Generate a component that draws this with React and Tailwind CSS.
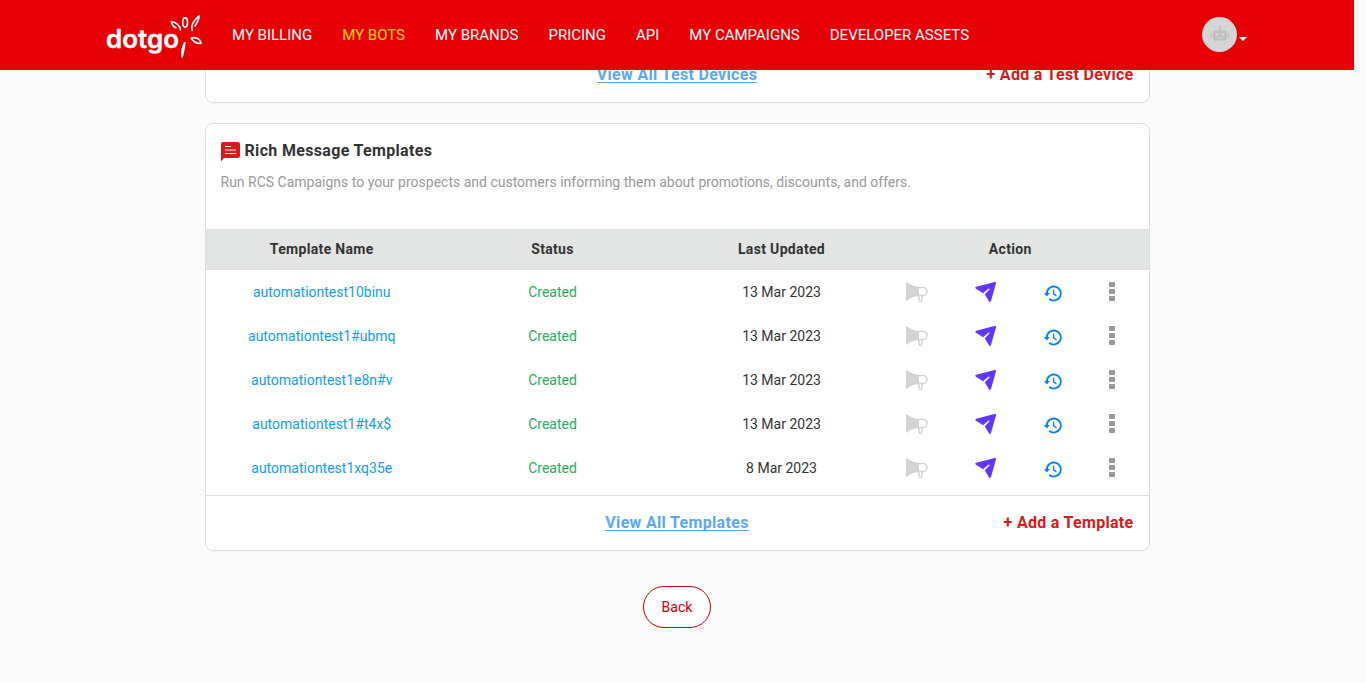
import React from "react";

const navItems = ["MY BILLING", "MY BOTS", "MY BRANDS", "PRICING", "API", "MY CAMPAIGNS", "DEVELOPER ASSETS"];

const templates = [
  { name: "automationtest10binu", date: "13 Mar 2023" },
  { name: "automationtest1#ubmq", date: "13 Mar 2023" },
  { name: "automationtest1e8n#v", date: "13 Mar 2023" },
  { name: "automationtest1#t4x$", date: "13 Mar 2023" },
  { name: "automationtest1xq35e", date: "8 Mar 2023" },
];

function Logo() {
  return (
    <svg className="block shrink-0" width="98" height="50" viewBox="106 10 98 50" fill="none" aria-label="dotgo">
      <text x="106" y="47.6" textLength="73" lengthAdjust="spacingAndGlyphs" fill="#fff" fontFamily="Inter, sans-serif" fontWeight="600" fontSize="25" stroke="#fff" strokeWidth="0.4">
        dotgo
      </text>
      <g stroke="#fff" strokeWidth="1.6" strokeLinejoin="round" strokeLinecap="round">
        <path d="M180.5 30C180.5 26 175.5 21.5 171.3 21.5C172 25 173.8 27 176 27.7" />
        <ellipse cx="185.1" cy="22.5" rx="2.4" ry="4.6" />
        <path d="M192.2 30.4C190.3 25.5 194.2 20 199 15.8C199.3 19.5 197 23 195 26" />
        <path d="M191.2 38.3C194.5 36.7 200.3 38.3 201 43.3C197.5 44 193.8 42 191.2 38.3Z" />
        <path d="M184.9 42.5C182.8 46 181.6 52 182.1 57C183.5 52.5 184.4 47.5 184.9 42.5Z" />
      </g>
    </svg>
  );
}

function Avatar() {
  return (
    <span className="-mt-[2px] flex size-[35px] items-center justify-center rounded-full bg-[#d5d5d5]">
      <svg className="-mt-[3px]" width="20" height="18" viewBox="0 0 20 18" fill="#c0c0c0">
        <circle cx="10" cy="3" r="1" fill="none" stroke="#c0c0c0" />
        <path d="M9.5 4h1v3h-1z" />
        <rect x="3" y="6.5" width="14" height="10" rx="2" />
        <path d="M2.2 9v5C0 14 0 9 2.2 9ZM17.8 9v5C20 14 20 9 17.8 9Z" />
        <circle cx="7" cy="10.5" r="1.4" fill="#d8d8d8" />
        <circle cx="13" cy="10.5" r="1.4" fill="#d8d8d8" />
        <path d="M7.5 14h5" stroke="#d8d8d8" />
      </svg>
    </span>
  );
}

function Megaphone() {
  return (
    <svg className="block" width="22" height="21" viewBox="0 0 22 21" fill="none">
      <path d="M0 1Q0 0 1.3.5Q6.5 4.6 13 4.8V14Q6 14.4 1.3 18.4Q0 19 0 18Z" fill="#d3d3d3" />
      <path d="M13 5.4H17A4 4 0 0 1 17 13.4H13M12.6 14L13.4 19Q14.5 20 15.4 19L16.3 14" stroke="#d3d3d3" strokeWidth="1.5" />
    </svg>
  );
}

function Send() {
  return (
    <svg className="block" width="22" height="22" viewBox="0 0 22 22" fill="#6236ff">
      <path d="M19.5 1Q21.5.5 21 2.3L16 20Q15 22 14 20.3L9.8 13.4L14.8 8.1Q13.8 7.2 13 8L8 12.2L1 7.8Q-.5 6.4 1.2 5.7Z" />
    </svg>
  );
}

function History() {
  return (
    <svg className="mt-[2px] block" width="18" height="17" viewBox="0 0 18 17" fill="none" stroke="#0080ff" strokeWidth="1.8">
      <path d="M2.8 8.5A7 7 0 1 1 5.2 13.8" />
      <path d="M0 8.1H5.8L2.9 11.5Z" fill="#0080ff" stroke="none" />
      <path d="M9.6 4.7V8.8L12.4 10.8" strokeWidth="1.4" />
    </svg>
  );
}

function Dots() {
  return (
    <svg className="-mt-[1px] block" width="6" height="19" viewBox="0 0 6 19" fill="#999">
      <rect width="6" height="5" rx="1" />
      <rect y="7" width="6" height="5" rx="1" />
      <rect y="14" width="6" height="5" rx="1" />
    </svg>
  );
}

function CardFooter({ view, add }) {
  return (
    <div className="grid h-[54px] grid-cols-3 items-center px-[15px] text-[16px] leading-[20px] font-bold">
      <span />
      <a className="justify-self-center border-b border-[#5aa8f5] leading-[15px] tracking-[0.32px] text-[#5aa8f5]">{view}</a>
      <a className="justify-self-end tracking-[0.3px] text-[#d71920]">{add}</a>
    </div>
  );
}

export default function App() {
  return (
    <div className="h-[683px] overflow-hidden bg-[#fafafa] font-[Roboto,sans-serif] text-[14px] text-[#333]">
      <div className="w-[1354px]">
        <header className="relative z-10 flex h-[70px] items-center bg-[#e60005] pr-[107px] pl-[106px]">
          <Logo />
          <nav className="ml-7 flex gap-[30px] text-[15px] leading-[20px] whitespace-nowrap text-white">
            {navItems.map((item) => (
              <a key={item} className={item === "MY BOTS" ? "text-[#ffd800]" : ""}>{item}</a>
            ))}
          </nav>
          <div className="ml-auto flex items-center gap-[2px]">
            <Avatar />
            <svg className="mt-[7px]" width="8" height="4" viewBox="0 0 8 4" fill="#fff"><path d="M0 0h8L4 4z" /></svg>
          </div>
        </header>

        <main className="mx-auto flex w-[945px] flex-col items-center">
          <section className="-mt-[23px] w-full rounded-b-[8px] border border-[#dedede] bg-white">
            <CardFooter view="View All Test Devices" add="+ Add a Test Device" />
          </section>

          <section className="mt-[20px] h-[428px] w-full rounded-[8px] border border-[#dedede] bg-white">
            <div className="h-[105px] px-[15px] pt-[16px]">
              <h2 className="flex h-[20px] items-center gap-[5px] text-[16px] leading-[20px] font-bold tracking-[0.33px]">
                <svg className="mt-[3px]" width="19" height="20" viewBox="0 0 19 20">
                  <path d="M2 0H17Q19 0 19 2V14Q19 16 17 16H3L0 19.5V2Q0 0 2 0Z" fill="#d71920" />
                  <path d="M4 4.5h6M4 8h11M4 11.5h11" stroke="#fff" />
                </svg>
                <span className="pt-[2px]">Rich Message Templates</span>
              </h2>
              <p className="mt-[12px] leading-[20px] text-[#999]">
                Run RCS Campaigns to your prospects and customers informing them about promotions, discounts, and offers.
              </p>
            </div>
            <div className="grid h-[41px] grid-cols-[232.5px_229px_229px_252.5px] items-center border-b border-[#dedede] bg-[#e3e5e4] text-center font-bold tracking-[0.33px]">
              <span>Template Name</span>
              <span>Status</span>
              <span>Last Updated</span>
              <span className="pr-[24px]">Action</span>
            </div>
            <div className="h-[226px] border-b border-[#dedede]">
              {templates.map((row) => (
                <div key={row.name} className="grid h-[44px] grid-cols-[232.5px_229px_229px_252.5px] items-center text-center">
                  <a className="text-[#0d9ff2]">{row.name}</a>
                  <span className="text-[#27ae60]">Created</span>
                  <span>{row.date}</span>
                  <div className="flex items-center justify-between pr-[34px] pl-[9.5px]">
                    <Megaphone />
                    <Send />
                    <History />
                    <Dots />
                  </div>
                </div>
              ))}
            </div>
            <CardFooter view="View All Templates" add="+ Add a Template" />
          </section>

          <button className="mt-[35px] h-[42px] w-[68px] rounded-full border border-[#c00] bg-white text-[14px] text-[#c00]">Back</button>
        </main>
      </div>
    </div>
  );
}
